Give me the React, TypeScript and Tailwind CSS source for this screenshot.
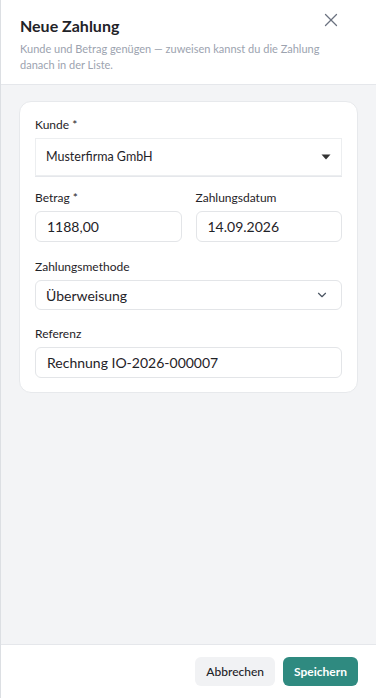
import { ChevronDown, X } from 'lucide-react';

const font = { fontFamily: 'Lato, "Noto Sans", sans-serif' };

const Label = ({ children }: { children: React.ReactNode }) => (
  <div className="mb-[5px] text-[12px] leading-[16px] text-[#1f2328]">{children}</div>
);

const TextInput = ({ value }: { value: string }) => (
  <div className="flex h-[31px] items-center rounded-[6px] border border-[#e3e5e8] bg-white px-[11px] text-[14px] text-[#1f2328]">
    {value}
  </div>
);

export default function App() {
  return (
    <div
      className="flex h-screen w-full flex-col border-l border-[#dcdfe3] bg-white"
      style={font}
    >
      <div className="relative border-b border-[#e5e7eb] px-[19px] pb-[11px] pt-[15px]">
        <h1 className="text-[16px] font-bold leading-[22px] text-[#1f2328]">
          Neue Zahlung
        </h1>
        <p className="mt-[4px] max-w-[300px] text-[11px] leading-[16px] text-[#9ca3af]">
          Kunde und Betrag genügen — zuweisen kannst du die Zahlung danach in der Liste.
        </p>
        <button className="absolute right-[34px] top-[9px] text-[#6b7280]">
          <X size={22} strokeWidth={1.4} />
        </button>
      </div>

      <div className="flex-1 bg-[#f3f4f6] px-[18px] pt-[16px]">
        <div className="rounded-[12px] border border-[#e7e9ec] bg-white px-[15px] pb-[14px] pt-[15px]">
          <Label>Kunde *</Label>
          <div className="flex h-[38px] items-center justify-between border border-[#eceef0] bg-white pl-[10px] pr-[10px] text-[12.5px] text-[#1f2328] shadow-[0_1px_0_#e5e7eb]">
            <span>Musterfirma GmbH</span>
            <svg width="10" height="6" viewBox="0 0 10 6">
              <path d="M0.5 0.5h9L5 5.5z" fill="#333" />
            </svg>
          </div>

          <div className="mt-[14px] grid grid-cols-2 gap-[14px]">
            <div>
              <Label>Betrag *</Label>
              <TextInput value="1188,00" />
            </div>
            <div>
              <Label>Zahlungsdatum</Label>
              <TextInput value="14.09.2026" />
            </div>
          </div>

          <div className="mt-[17px]">
            <Label>Zahlungsmethode</Label>
            <div className="flex h-[30px] items-center justify-between rounded-[6px] border border-[#e3e5e8] bg-white pl-[10px] pr-[12px] text-[14px] text-[#1f2328]">
              <span>Überweisung</span>
              <ChevronDown size={14} strokeWidth={2} className="text-[#4b5563]" />
            </div>
          </div>

          <div className="mt-[16px]">
            <Label>Referenz</Label>
            <TextInput value="Rechnung IO-2026-000007" />
          </div>
        </div>
      </div>

      <div className="flex justify-end gap-[8px] border-t border-[#e5e7eb] px-[18px] pb-[12px] pt-[12px]">
        <button className="h-[29px] rounded-[6px] bg-[#f1f2f4] px-[11px] text-[12px] font-medium text-[#1f2328]">
          Abbrechen
        </button>
        <button className="h-[29px] rounded-[6px] bg-[#2f8a80] px-[11px] text-[12px] font-bold text-white">
          Speichern
        </button>
      </div>
    </div>
  );
}
